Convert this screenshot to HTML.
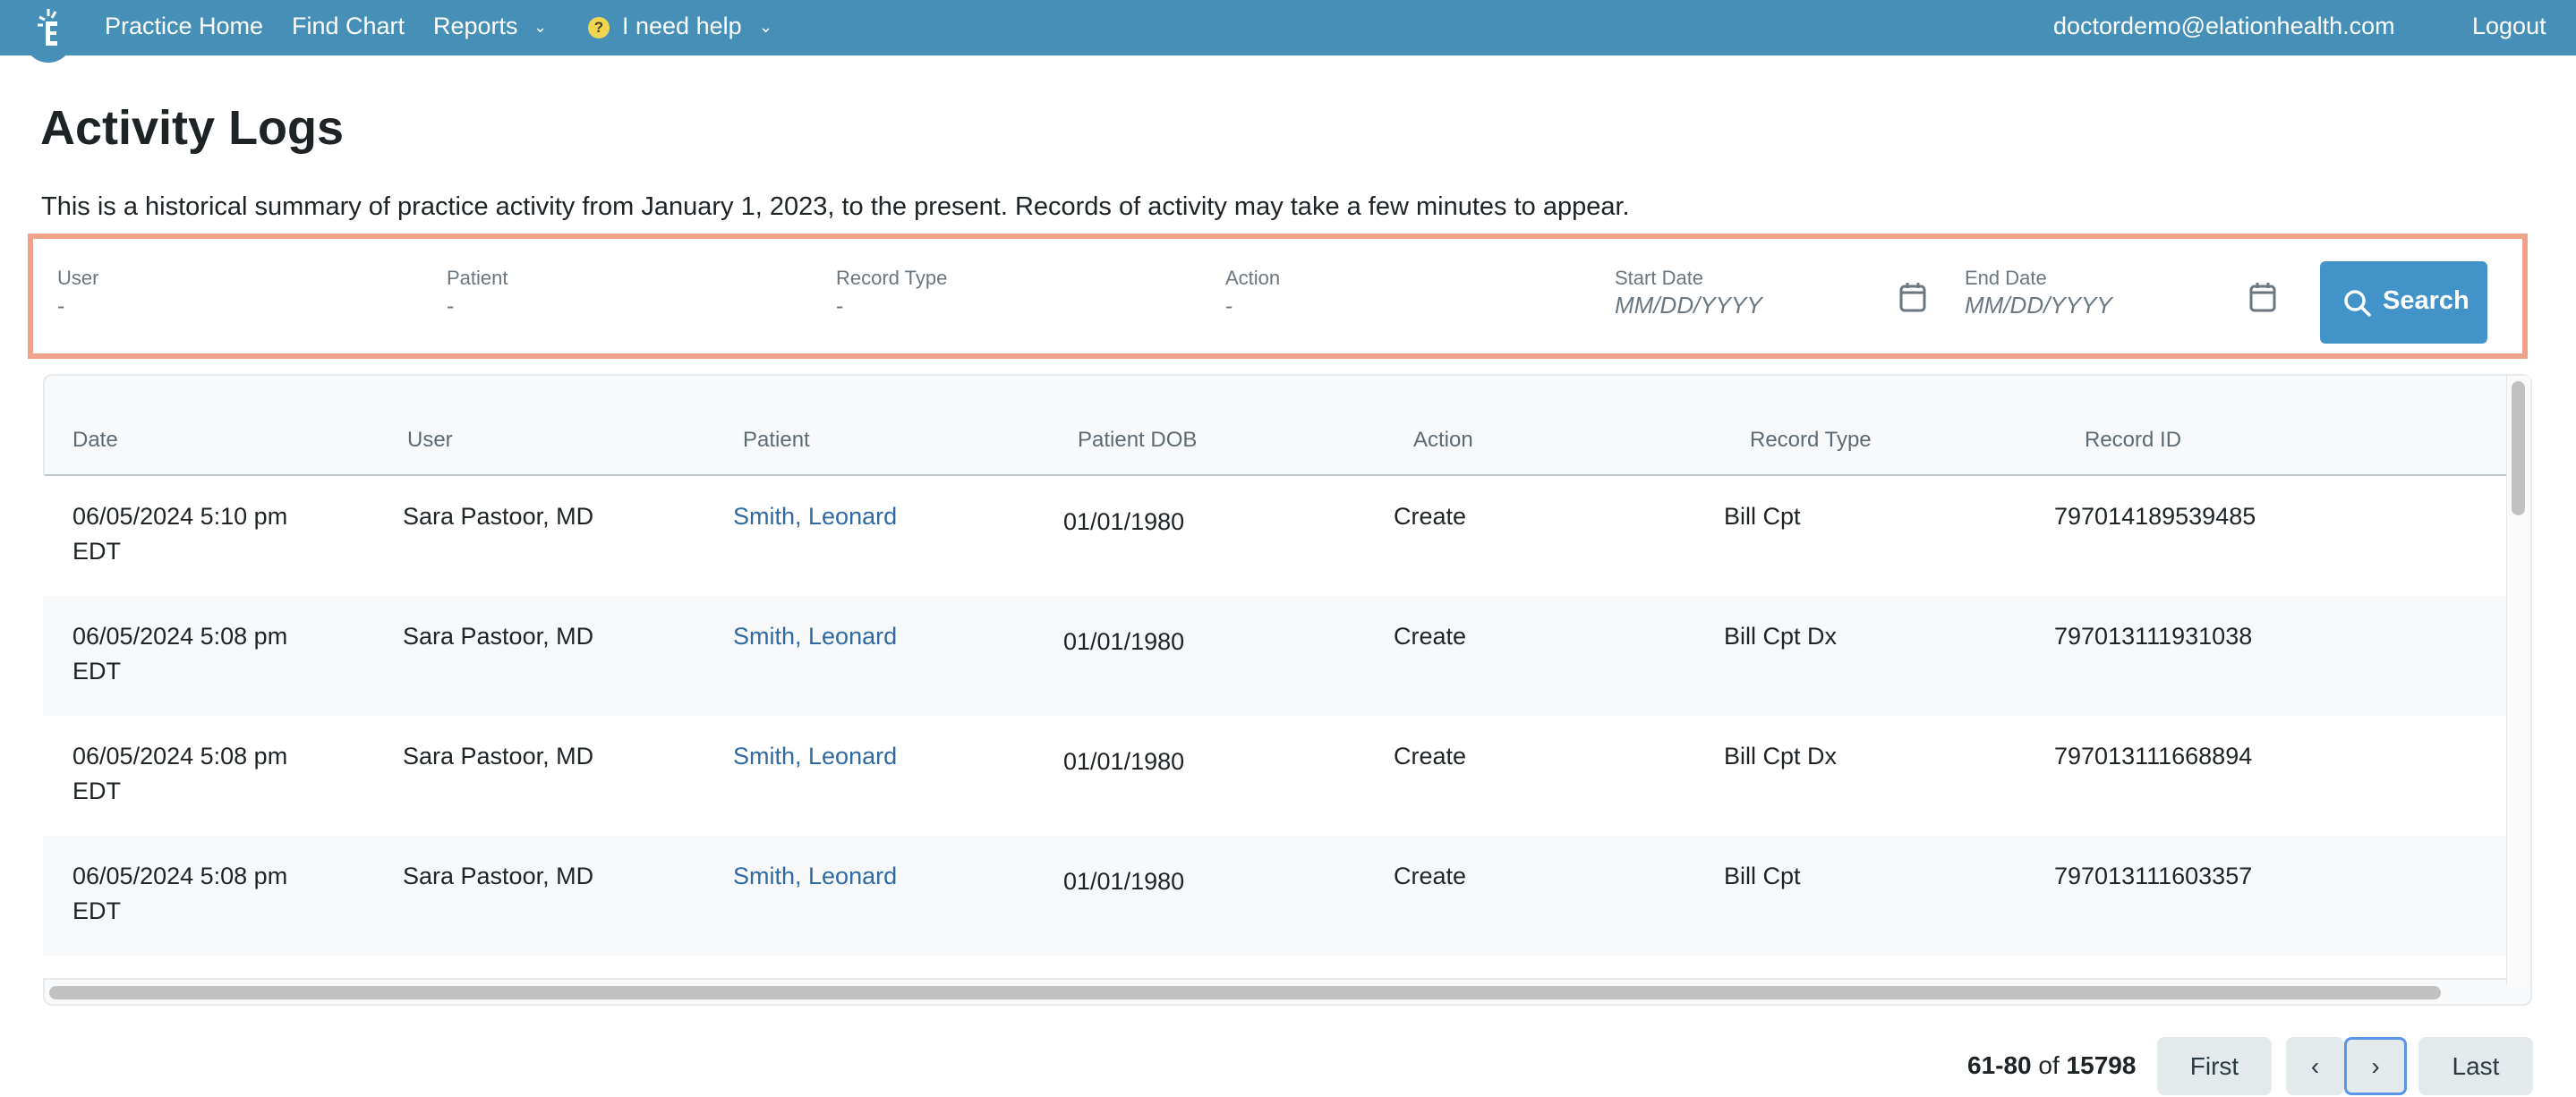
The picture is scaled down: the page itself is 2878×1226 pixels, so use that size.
<!DOCTYPE html>
<html><head><meta charset="utf-8"><style>
*{margin:0;padding:0;box-sizing:border-box}
body{width:2878px;height:1226px;background:#fff;font-family:"Liberation Sans",sans-serif;position:relative;overflow:hidden;color:#1e2326}
.a{position:absolute;white-space:nowrap}
.nav{position:absolute;left:0;top:0;width:2878px;height:62px;background:#4690b8}
.nv{position:absolute;top:14px;font-size:27px;color:#fff}
.lbl{position:absolute;top:298px;font-size:22px;color:#6b7780}
.val{position:absolute;top:328px;font-size:25px;color:#6b7780}
.ph{position:absolute;top:326px;font-size:26px;color:#6b7780;font-style:italic}
.th{position:absolute;top:478px;font-size:24px;color:#5f6b73}
.row{position:absolute;left:48px;width:2752px;height:134px}
.c{position:absolute;font-size:27px;line-height:39px;color:#1e2326;top:26px}
.btn{position:absolute;top:1159px;height:65px;background:#e4e9ec;border-radius:8px;font-size:28px;color:#2c3a42;text-align:center;line-height:65px}
</style></head><body>
<div class="nav"></div>
<div class="a" style="left:27px;top:10px;width:54px;height:60px;border-radius:0 0 27px 27px;background:#4690b8"></div>
<svg class="a" style="left:30px;top:8px" width="46" height="48" viewBox="0 0 46 48"><line x1="24" y1="2" x2="24" y2="10" stroke="#fff" stroke-width="3"/><line x1="32" y1="5" x2="28" y2="12" stroke="#fff" stroke-width="3"/><line x1="14" y1="11" x2="20" y2="14" stroke="#fff" stroke-width="3"/><line x1="12" y1="20" x2="18" y2="20" stroke="#fff" stroke-width="3"/><path d="M21 16H34V21H26V27H33V31H26V38H34V43H21Z" fill="#fff"/></svg>
<div class="nv" style="left:117px">Practice Home</div>
<div class="nv" style="left:326px">Find Chart</div>
<div class="nv" style="left:484px">Reports</div>
<div class="nv" style="left:596px;font-size:18px;top:20px">⌄</div>
<div class="a" style="left:657px;top:19px;width:24px;height:24px;border-radius:12px;background:#f1d550;color:#4b4020;font-size:17px;font-weight:bold;text-align:center;line-height:24px">?</div>
<div class="nv" style="left:695px">I need help</div>
<div class="nv" style="left:848px;font-size:18px;top:20px">⌄</div>
<div class="nv" style="left:2294px">doctordemo@elationhealth.com</div>
<div class="nv" style="left:2762px">Logout</div>

<div class="a" style="left:45px;top:112px;font-size:54px;font-weight:bold;color:#1e2326">Activity Logs</div>
<div class="a" style="left:46px;top:215px;font-size:29px;color:#1e2326">This is a historical summary of practice activity from January 1, 2023, to the present. Records of activity may take a few minutes to appear.</div>

<div class="a" style="left:31px;top:261px;width:2793px;height:140px;border:6px solid #eea28a"></div>
<div class="lbl" style="left:64px">User</div><div class="val" style="left:64px">-</div>
<div class="lbl" style="left:499px">Patient</div><div class="val" style="left:499px">-</div>
<div class="lbl" style="left:934px">Record Type</div><div class="val" style="left:934px">-</div>
<div class="lbl" style="left:1369px">Action</div><div class="val" style="left:1369px">-</div>
<div class="lbl" style="left:1804px">Start Date</div><div class="ph" style="left:1804px">MM/DD/YYYY</div>
<div class="lbl" style="left:2195px">End Date</div><div class="ph" style="left:2195px">MM/DD/YYYY</div>
<svg class="a" style="left:2121px;top:314px" width="32" height="36" viewBox="0 0 32 36"><rect x="3" y="6" width="26" height="27" rx="4" fill="none" stroke="#6b7780" stroke-width="3"/><line x1="3" y1="13" x2="29" y2="13" stroke="#6b7780" stroke-width="3"/><line x1="10" y1="2" x2="10" y2="8" stroke="#6b7780" stroke-width="3"/><line x1="22" y1="2" x2="22" y2="8" stroke="#6b7780" stroke-width="3"/></svg>
<svg class="a" style="left:2512px;top:314px" width="32" height="36" viewBox="0 0 32 36"><rect x="3" y="6" width="26" height="27" rx="4" fill="none" stroke="#6b7780" stroke-width="3"/><line x1="3" y1="13" x2="29" y2="13" stroke="#6b7780" stroke-width="3"/><line x1="10" y1="2" x2="10" y2="8" stroke="#6b7780" stroke-width="3"/><line x1="22" y1="2" x2="22" y2="8" stroke="#6b7780" stroke-width="3"/></svg>
<div class="a" style="left:2592px;top:292px;width:187px;height:92px;background:#4293c9;border-radius:6px"></div>
<svg class="a" style="left:2617px;top:322px" width="34" height="34" viewBox="0 0 34 34"><circle cx="14" cy="14" r="10" fill="none" stroke="#fff" stroke-width="3.5"/><line x1="21" y1="21" x2="30" y2="30" stroke="#fff" stroke-width="3.5" stroke-linecap="round"/></svg>
<div class="a" style="left:2662px;top:320px;font-size:29px;font-weight:bold;color:#fff">Search</div>

<div class="a" style="left:48px;top:418px;width:2781px;height:706px;border:2px solid #e6eaec;border-radius:10px;background:#f7f9fa"></div>
<div class="th" style="left:81px">Date</div>
<div class="th" style="left:455px">User</div>
<div class="th" style="left:830px">Patient</div>
<div class="th" style="left:1204px">Patient DOB</div>
<div class="th" style="left:1579px">Action</div>
<div class="th" style="left:1955px">Record Type</div>
<div class="th" style="left:2329px">Record ID</div>
<div class="a" style="left:50px;top:530px;width:2750px;height:2px;background:#b9c4c9"></div>

<div class="row" style="top:532px;background:#fff"><div class="c" style="left:33px">06/05/2024 5:10 pm<br>EDT</div><div class="c" style="left:402px">Sara Pastoor, MD</div><div class="c" style="left:771px;color:#2f6aa3">Smith, Leonard</div><div class="c" style="left:1140px;top:32px">01/01/1980</div><div class="c" style="left:1509px">Create</div><div class="c" style="left:1878px">Bill Cpt</div><div class="c" style="left:2247px">797014189539485</div></div>
<div class="row" style="top:666px;background:#f7f8fa"><div class="c" style="left:33px">06/05/2024 5:08 pm<br>EDT</div><div class="c" style="left:402px">Sara Pastoor, MD</div><div class="c" style="left:771px;color:#2f6aa3">Smith, Leonard</div><div class="c" style="left:1140px;top:32px">01/01/1980</div><div class="c" style="left:1509px">Create</div><div class="c" style="left:1878px">Bill Cpt Dx</div><div class="c" style="left:2247px">797013111931038</div></div>
<div class="row" style="top:800px;background:#fff"><div class="c" style="left:33px">06/05/2024 5:08 pm<br>EDT</div><div class="c" style="left:402px">Sara Pastoor, MD</div><div class="c" style="left:771px;color:#2f6aa3">Smith, Leonard</div><div class="c" style="left:1140px;top:32px">01/01/1980</div><div class="c" style="left:1509px">Create</div><div class="c" style="left:1878px">Bill Cpt Dx</div><div class="c" style="left:2247px">797013111668894</div></div>
<div class="row" style="top:934px;background:#f7f8fa"><div class="c" style="left:33px">06/05/2024 5:08 pm<br>EDT</div><div class="c" style="left:402px">Sara Pastoor, MD</div><div class="c" style="left:771px;color:#2f6aa3">Smith, Leonard</div><div class="c" style="left:1140px;top:32px">01/01/1980</div><div class="c" style="left:1509px">Create</div><div class="c" style="left:1878px">Bill Cpt</div><div class="c" style="left:2247px">797013111603357</div></div>
<div class="row" style="top:1068px;height:27px;background:#fff;border-bottom:2px solid #e6eaec"></div>
<div class="a" style="left:55px;top:1102px;width:2672px;height:15px;border-radius:8px;background:#c1c1c1"></div>
<div class="a" style="left:2800px;top:420px;width:27px;height:680px;background:#fafafa;border-left:1px solid #e6e6e6"></div>
<div class="a" style="left:2806px;top:426px;width:15px;height:150px;border-radius:8px;background:#c1c1c1"></div>

<div class="a" style="left:2198px;top:1175px;font-size:28px;color:#1e2326"><b>61-80</b> of <b>15798</b></div>
<div class="btn" style="left:2410px;width:128px">First</div>
<div class="btn" style="left:2554px;width:65px">‹</div>
<div class="btn" style="left:2619px;width:70px;border:3px solid #5b95e8;line-height:59px">›</div>
<div class="btn" style="left:2702px;width:128px">Last</div>
</body></html>
